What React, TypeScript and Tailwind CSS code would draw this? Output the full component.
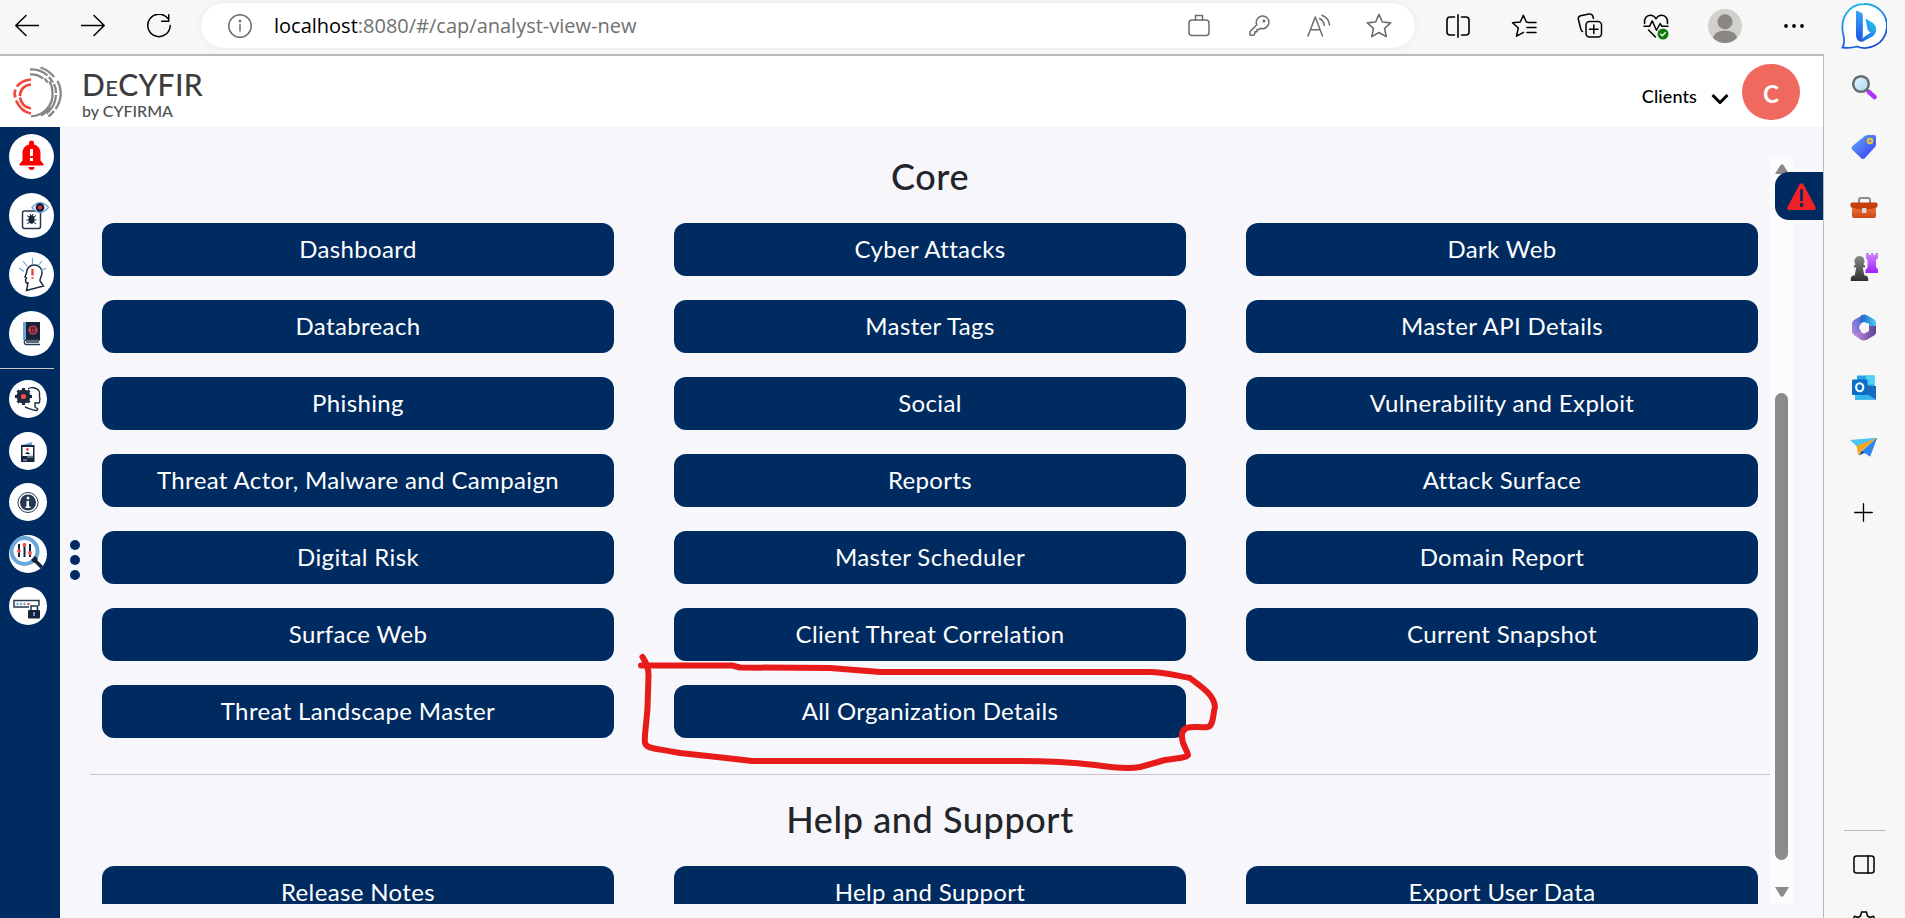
import type { ReactNode } from "react";

const CORE = [
  ["Dashboard", "Cyber Attacks", "Dark Web"],
  ["Databreach", "Master Tags", "Master API Details"],
  ["Phishing", "Social", "Vulnerability and Exploit"],
  ["Threat Actor, Malware and Campaign", "Reports", "Attack Surface"],
  ["Digital Risk", "Master Scheduler", "Domain Report"],
  ["Surface Web", "Client Threat Correlation", "Current Snapshot"],
  ["Threat Landscape Master", "All Organization Details"],
];
const HELP = ["Release Notes", "Help and Support", "Export User Data"];

type IconProps = { children: ReactNode; className?: string; box?: string };

function Line({ children, className = "size-6", box = "0 0 24 24" }: IconProps) {
  return (
    <svg viewBox={box} className={`shrink-0 ${className}`} fill="none" stroke="currentColor" strokeWidth="1.5" strokeLinecap="round" strokeLinejoin="round">
      {children}
    </svg>
  );
}

function Pic({ children, className = "size-7", box = "0 0 28 28" }: IconProps) {
  return (
    <svg viewBox={box} className={`shrink-0 ${className}`} fill="none">
      {children}
    </svg>
  );
}

function Toolbar() {
  return (
    <div className="flex h-[54px] items-center bg-[#f7f7f7] pb-[3px] pl-[15px] text-black">
      <Line className="size-6"><path d="M24 11.5H1M11 1.5L.8 11.5L11 21.5" /></Line>
      <Line className="ml-[42px] size-6"><path d="M0 11.5h23M13 1.5l10.2 10L13 21.5" /></Line>
      <Line className="ml-[42px] size-6"><path d="M20.6 4.2A11.2 11.2 0 1 0 23.2 11.5M21.7 .8v6.5h-7" /></Line>
      <div className="ml-[30px] flex h-[45px] w-[1214px] items-center rounded-full bg-white pl-[27px] pr-[6px] text-[#6d6d6d] shadow-[0_0_6px_rgba(0,0,0,0.07)]">
        <Line className="size-6">
          <circle cx="12" cy="12" r="11.2" /><path d="M12 10.5v6.5" /><circle cx="12" cy="7.2" r=".6" fill="currentColor" />
        </Line>
        <div className="ml-[22px] flex-1 whitespace-nowrap font-['Open_Sans',sans-serif] text-[20px] leading-[28px] text-[#707070]">
          <span className="text-black">localhost</span>:8080/#/cap/analyst-view-new
        </div>
        <div className="flex w-[60px] justify-center">
          <Line className="h-6 w-[22px]" box="0 0 22 24"><rect x="1" y="6" width="20" height="15.5" rx="3" /><path d="M7.500 6V1.500h7V6" /></Line>
        </div>
        <div className="flex w-[60px] justify-center">
          <Line className="size-[21px]" box="0 0 21 21"><path d="M7.8 9.8A6.3 6.3 0 1 1 11.3 13.2L10 14.5H8v2.2H5.8V19L4.6 20.2H1.2c-.3-1.2-.4-2.6 0-3.8z" /><circle cx="15" cy="6" r=".8" fill="currentColor" /></Line>
        </div>
        <div className="flex w-[60px] justify-center">
          <Line className="size-6"><path d="M1 22L8.300 3L15.500 22M3.500 15.800H13M12.500 4.500a9 9 0 0 1 4.800 7M15 1.200a12 12 0 0 1 7.500 9.800" /></Line>
        </div>
        <div className="flex w-[60px] justify-center">
          <Line className="size-[26px]"><path d="M12 1.300l3.100 7 7.700.8-5.700 5.100 1.600 7.600L12 18l-6.700 3.800 1.600-7.600L1.200 9.100l7.700-.8z" /></Line>
        </div>
      </div>
      <div className="ml-[10px] flex w-[66px] justify-center">
        <Line className="size-6"><path d="M8.500 3H4a3 3 0 0 0-3 3v12a3 3 0 0 0 3 3h4.500M15.500 3H20a3 3 0 0 1 3 3v12a3 3 0 0 1-3 3h-4.500M12 .8v22.400" strokeWidth="1.600" /></Line>
      </div>
      <div className="flex w-[66px] justify-center">
        <Line className="h-6 w-[26px]" box="0 0 26 24"><path d="M17 8.300L15.300 8L12.300 1.200L9.300 8L1.500 8.700L7.300 14L5.500 22.200L12.500 18.300M17 8.500h8M16 13.500h9M16 18.500h9" /></Line>
      </div>
      <div className="flex w-[66px] justify-center">
        <Line className="h-[25px] w-[26px]" box="0 0 26 25"><rect x="9" y="8.500" width="15.500" height="15.500" rx="3.500" /><path d="M16.800 12v8.500M12.500 16.200H21M5.500 18.500C4.600 18 4 17.200 3.800 16L1.400 6.500C1 4.500 1.800 3.300 3.600 2.800L12 1c2-.4 3.300.3 3.800 2l.6 2.200" /></Line>
      </div>
      <div className="flex w-[66px] justify-center">
        <Line className="mt-[3px] size-[26px]" box="0 0 26 26">
          <path d="M1.500 9.500C.8 4.500 3.600 1.300 7.200 1.300c2.600 0 4.600 1.500 5.800 3.500 1.200-2 3.200-3.500 5.800-3.500 3.600 0 6.400 3.200 5.700 8.200M1 12.300h5.500L9.200 6.800l4.200 9.500 3.800-6.800 1.600 2.800H25M5.500 16l7 7" />
          <circle cx="20" cy="20" r="5.500" fill="#107c10" stroke="none" /><path d="M17.800 20.300l1.500 1.400 2.900-3" stroke="white" />
        </Line>
      </div>
      <div className="flex w-[71px] justify-center">
        <Pic className="size-[34px]" box="0 0 34 34"><circle cx="17" cy="17" r="17" fill="#d2d0cd" /><circle cx="17" cy="12.700" r="7.500" fill="#8a8684" /><path d="M5 29C6 24 10 21.700 17 21.700S28 24 29 29A17 17 0 0 1 5 29" fill="#8a8684" /></Pic>
      </div>
      <div className="flex w-[63px] justify-center pl-1">
        <Pic className="h-1 w-5" box="0 0 20 4"><circle cx="2" cy="2" r="1.900" fill="black" /><circle cx="10" cy="2" r="1.900" fill="black" /><circle cx="18" cy="2" r="1.900" fill="black" /></Pic>
      </div>
    </div>
  );
}

function Brand() {
  return (
    <div className="flex items-center pt-[3px]">
      <svg viewBox="0 0 52 54" className="h-[54px] w-[52px]" fill="none" strokeWidth="2.300">
        <g stroke="#868686">
          <path d="M19 50.300A22 22 0 0 0 40.500 26.500C40.500 22.500 39.300 18.500 37.500 15.500" />
          <path d="M18 8.400C23 8 28 10 31 12.500M32.500 12.500l3.300 4" />
          <path d="M18 3.500C25 3 31 5.500 35.500 9.500M37 11l4 5.500M42 18c1.200 2.500 2 6 2 9M44 29c-.4 7-4 14-9.500 18.500" />
          <path d="M28.500 1.500c6 2 10.500 5.500 13.500 9.500M45.500 15c5 9 4 20-2 28M42 45c-1.500 2-3.500 4-5.500 5.500" />
          <path d="M29 49.500c4-2 7-5 9-8.500" />
        </g>
        <g stroke="#f0483f" strokeWidth="2.700">
          <path d="M19 13.500C13 14 8 16.500 4.800 20.500M3.500 23.500C2.500 25.500 2.500 29 3.300 31.500M4 34.500C7 41 12.500 46.500 19 47.500" />
          <path d="M19 18.500C12 19 8 24 8 30M8 31.500C9 37 13 41.500 19 42.500" />
        </g>
      </svg>
      <div className="ml-[18px] flex flex-col pt-[3px] font-['Lato',sans-serif] text-[#3c3c3c]">
        <div className="text-[30px] font-medium leading-[30px] tracking-[0.3px]">D<span className="text-[22px]">E</span>CYFIR</div>
        <div className="-mt-px text-[16px] font-medium leading-[18px] text-[#505050]">by CYFIRMA</div>
      </div>
    </div>
  );
}

function Header() {
  return (
    <header className="flex h-[71px] items-center justify-between bg-white pl-[12px] pr-[23px]">
      <Brand />
      <div className="flex items-center">
        <span className="pt-[10px] font-['Lato',sans-serif] text-[18px] font-medium tracking-[0.1px] text-black">Clients</span>
        <Line className="mt-[13px] ml-[14px] h-[11px] w-[18px]" box="0 0 18 11"><path d="M1.500 2L9 9.500L16.500 2" strokeWidth="3" strokeLinecap="butt" strokeLinejoin="miter" /></Line>
        <div className="ml-[13px] flex h-[56px] w-[58px] items-center justify-center rounded-full bg-[#f0695f] pt-1 font-['Lato',sans-serif] text-[24px] font-bold text-white">C</div>
      </div>
    </header>
  );
}

function Round({ small, children }: { small?: boolean; children: ReactNode }) {
  return (
    <div className={`shrink-0 overflow-hidden rounded-full bg-white ${small ? "size-[38px]" : "size-[45px]"}`}>
      <svg viewBox={small ? "0 0 38 38" : "0 0 45 45"} className="size-full" fill="none">{children}</svg>
    </div>
  );
}

function LeftRail() {
  return (
    <nav className="flex w-[60px] shrink-0 flex-col bg-[#002b61] pt-[7px]">
      <div className="flex flex-col gap-[14px] pl-[9px]">
        <Round>
          <path d="M20 10.500V9a2.500 2.500 0 0 1 5 0v1.500c4.500 1.200 6.500 4.500 6.500 9v7L34.500 30v1.500H10.500V30l3-3.500v-7c0-4.500 2-7.800 6.500-9zM19.500 33h6a3 3 0 0 1-6 0z" fill="#fb0000" />
          <path d="M21 15h3v7h-3zM21 24h3v3h-3z" fill="white" />
        </Round>
        <Round>
          <rect x="13.500" y="18" width="18" height="17.500" rx="2" stroke="#26374f" strokeWidth="1.500" />
          <path d="M23 14.500Q31 5 39.500 14.500Q31 24 23 14.500z" fill="white" stroke="#6aa6da" strokeWidth="1.300" />
          <circle cx="31" cy="14.500" r="4.400" fill="#15243b" /><circle cx="31" cy="14.500" r="2" fill="#e02f3a" />
          <ellipse cx="22.500" cy="26.500" rx="3" ry="4.300" fill="#15243b" />
          <path d="M18 22.500l2 1.500M27 22.500l-2 1.500M17.500 27h10M18 31l2.500-2M27 31l-2.500-2M21 21l1 2M24 21l-1 2" stroke="#15243b" />
        </Round>
        <Round>
          <path d="M17.500 38.500l1.500-7.500c-3 .5-2-2-2.500-3.500l1-1.500-1.500-1 1.500-4c0-5 3.500-8 7.500-8 5 0 8 3.500 8 7.500 0 4-2.500 6-2 8.500l3.500 5z" stroke="#1b2a40" strokeWidth="1.500" />
          <path d="M23.500 17v6.500M23.500 25.200v1.500" stroke="#ef3a3a" strokeWidth="2.300" />
          <path d="M10 16l5 3.500M14 9l4 5M23.500 6v6M33 9l-4 5M37 16l-5 3" stroke="#6aa6da" strokeWidth="1.200" />
        </Round>
        <Round>
          <path d="M16 11h15v18H14v-16a2 2 0 0 1 2-2z" fill="#15243b" /><path d="M14 13a2 2 0 0 1 2-2h1v18h-3z" fill="#6aa6da" />
          <path d="M31 29H17a2.300 2.300 0 0 0 0 4.500h14M17 31h13" stroke="#26374f" strokeWidth="1.300" />
          <circle cx="24" cy="19" r="4" stroke="#e5434c" strokeWidth="1.200" /><path d="M20 19h8M24 15v8M22 15.500q-1.500 3.500 0 7M26 15.500q1.500 3.500 0 7" stroke="#e5434c" strokeWidth=".8" />
        </Round>
      </div>
      <div className="mt-[12px] w-[54px] border-t border-[#c9c9c9]" />
      <div className="mt-[11px] flex flex-col gap-[13.700px] pl-[9px]">
        <Round small>
          <circle cx="14.500" cy="16.500" r="5" stroke="#1b2a40" strokeWidth="4" />
          <path d="M14.500 8v17M6 16.500h17M8.500 10.500l12 12M8.500 22.500l12-12" stroke="#1b2a40" strokeWidth="3" />
          <circle cx="14.500" cy="16.500" r="4" fill="#1b2a40" /><circle cx="14.500" cy="16.500" r="2.600" fill="#f0504a" />
          <path d="M19 9c2-2 9-2 11 2 1.500 3-.5 5 1 8-1 1 .5 3-1 4h-4v4l3 2M16 27c4 1.500 7 3.500 12 3.500l1-2" stroke="#1b2a40" strokeWidth="1.400" />
        </Round>
        <Round small>
          <path d="M13 13l10-3v3z" fill="#6aa6da" /><path d="M12 13h13.500v17H12z" fill="#15243b" /><path d="M13.500 15h10.500v9H13.500z" fill="white" />
          <circle cx="18.500" cy="17.500" r="1.400" fill="#f0504a" /><path d="M16 22q2.500-4 5 0z" fill="#15243b" /><path d="M18 23h6M18 25h6M14 28h4" stroke="#b6bcc6" strokeWidth="1" />
        </Round>
        <Round small>
          <circle cx="19" cy="19.500" r="10" stroke="#26374f" strokeWidth="1" /><circle cx="19" cy="19.500" r="8" fill="#26374f" />
          <path d="M17.500 18h2.500v6.500h-2.500zM16.500 23.500h5v1.500h-5z" fill="white" /><circle cx="19" cy="15" r="1.500" fill="white" />
        </Round>
        <Round small>
          <circle cx="15.500" cy="16" r="13" stroke="#6aa6da" strokeWidth="4" /><path d="M22 25l4-4 3 3-4 4z" fill="#15243b" /><path d="M26 25.500l7 7" stroke="#15243b" strokeWidth="3.500" />
          <path d="M10 9v13M15.500 8.500v13.500M21 9v13" stroke="#15243b" strokeWidth="2" />
          <circle cx="10" cy="16" r="1.900" fill="#f0504a" /><circle cx="15.500" cy="10" r="1.900" fill="#f0504a" /><circle cx="21" cy="18" r="1.900" fill="#f0504a" />
        </Round>
        <Round small>
          <path d="M20 20H5v-6.500h25V19" stroke="#26374f" strokeWidth="1.500" />
          <g fill="#6aa6da"><circle cx="8.500" cy="17" r="1.200" /><circle cx="12" cy="17" r="1.200" /><circle cx="15.500" cy="17" r="1.200" /></g><circle cx="19.500" cy="17" r="1.300" fill="#f0504a" />
          <path d="M22 23v-4h6.500v4" stroke="#26374f" strokeWidth="1.600" /><rect x="19" y="23" width="12" height="8.500" rx="1" fill="#15243b" /><path d="M25 25v4" stroke="#6aa6da" strokeWidth="1.800" />
        </Round>
      </div>
    </nav>
  );
}

function Tile({ label }: { label: string }) {
  return (
    <button className="flex h-[53px] items-center justify-center whitespace-nowrap rounded-[12px] bg-[#002b61] pb-[2px] font-['Lato',sans-serif] text-[24px] leading-[36px] tracking-[0.36px] text-white">
      {label}
    </button>
  );
}

function Title({ children }: { children: ReactNode }) {
  return <h2 className="text-center font-['Lato',sans-serif] text-[36px] font-medium leading-[44px] tracking-[0.6px] text-[#212529]">{children}</h2>;
}

function Main() {
  return (
    <main className="relative flex flex-1 bg-[#f7f6fb]">
      <div className="flex w-[30px] flex-col items-center gap-[5px] pt-[413px]">
        <i className="size-[10px] rounded-full bg-[#002b61]" />
        <i className="size-[10px] rounded-full bg-[#002b61]" />
        <i className="size-[10px] rounded-full bg-[#002b61]" />
      </div>
      <div className="h-[777px] w-[1680px] overflow-hidden">
        <div className="pt-[27px]"><Title>Core</Title></div>
        <div className="mt-[25px] grid grid-cols-3 gap-x-[60px] gap-y-6 px-3">
          {CORE.flat().map((label) => <Tile key={label} label={label} />)}
        </div>
        <div className="mt-[36px] border-t border-[#c4c4ca]" />
        <div className="mt-[22px]"><Title>Help and Support</Title></div>
        <div className="mt-[25px] grid grid-cols-3 gap-x-[60px] px-3">
          {HELP.map((label) => <Tile key={label} label={label} />)}
        </div>
      </div>
      <div className="mt-[30px] flex h-[747px] w-[23px] flex-col items-center bg-[#fcfcfc] pt-[7px] pb-[7px]">
        <Pic className="h-[10px] w-[14px]" box="0 0 14 10"><path d="M5.500 1Q7-.5 8.500 1L14 10H0z" fill="#8b8b8b" /></Pic>
        <div className="mt-[219px] h-[467px] w-[13px] rounded-full bg-[#8b8b8b]" />
        <Pic className="mt-auto h-[10px] w-[14px]" box="0 0 14 10"><path d="M0 0h14L8.500 9Q7 10.500 5.500 9z" fill="#8b8b8b" /></Pic>
      </div>
      <div className="absolute top-[45px] right-0 flex h-[48px] w-[48px] items-center justify-center rounded-l-[14px] bg-[#002b61] pl-1">
        <Pic className="h-[27px] w-[29px]" box="0 0 29 27"><path d="M12.500 1.500q2-2.500 4 0L28.500 24q.8 3-1.500 3H2q-2.300 0-1.500-3z" fill="#f02228" /><path d="M14.500 7.500v9.500" stroke="#002b61" strokeWidth="2.800" strokeLinecap="round" /><circle cx="14.500" cy="22" r="1.900" fill="#002b61" /></Pic>
      </div>
      <svg className="pointer-events-none absolute top-[523px] left-[570px] h-[130px] w-[600px]" viewBox="630 650 600 130" fill="none" stroke="#e81b1b" strokeWidth="6" strokeLinecap="round" strokeLinejoin="round">
        <path d="M642.500 657C646 662 648.500 667 648.500 675L647.500 708C646 728 644 738 645 743C647 749 655 748 680 753L726 758L752 761H1020C1045 761 1070 762 1095 765C1115 768 1130 769 1140 767L1165 760C1178 758 1186 758 1188 755C1186 747 1181 744 1182 734C1184 724 1195 728 1208 727C1214 725 1213 712 1215 707C1214 694 1200 686 1190 678C1178 676 1165 672 1150 672H880L830 668L740 667.500L732 665.500H641" />
      </svg>
    </main>
  );
}

function SideItem({ children }: { children: ReactNode }) {
  return <div className="flex h-[60px] shrink-0 items-center justify-center">{children}</div>;
}

function EdgeRail() {
  return (
    <aside className="flex h-[918px] w-[81px] shrink-0 flex-col bg-[#f7f7f7] pr-[2px]">
      <div className="flex h-[57px] items-start justify-center pt-[3px]">
        <Pic className="h-[47px] w-[46px]" box="0 0 46 47">
          <defs>
            <linearGradient id="ring" x1="0" y1="0" x2=".4" y2="1"><stop stopColor="#20c3ee" /><stop offset="1" stopColor="#1b4fd6" /></linearGradient>
            <linearGradient id="stem" x1="0" y1="0" x2="0" y2="1"><stop stopColor="#39a8f5" /><stop offset="1" stopColor="#1c55e4" /></linearGradient>
            <linearGradient id="bowl" x1="1" y1="0" x2="0" y2="1"><stop stopColor="#28d0ee" /><stop offset="1" stopColor="#1d4ee0" /></linearGradient>
          </defs>
          <path d="M23 1a22 22 0 1 1-7 42.500C11 45 5 45 1.500 44.500 3.500 41 3.500 36 2 30C-1 15 8 1 23 1z" fill="white" stroke="url(#ring)" strokeWidth="1.800" />
          <path d="M15 8.500Q15 7.500 16.500 8l3.500 1.600q1.800.8 1.800 2.600V34q-1.500 3-4.500 3-2-1-2.300-4z" fill="url(#stem)" />
          <path d="M24.500 15.500l6.500 3.700c5.500 3.500 5.500 10.500 1 14L22 38.500q-4.500 1-6-3 3 1.500 6-.8l7.500-5.200-2.800-2.500z" fill="url(#bowl)" />
        </Pic>
      </div>
      <SideItem>
        <Pic className="size-[26px]" box="0 0 26 26">
          <defs><linearGradient id="glass" x1="0" y1="0" x2="1" y2="1"><stop stopColor="#eaf6fd" /><stop offset="1" stopColor="#a8d6f4" /></linearGradient></defs>
          <path d="M15 15l4 4" stroke="#666" strokeWidth="3" /><circle cx="10" cy="10" r="7.800" fill="url(#glass)" stroke="#666b6e" strokeWidth="2.500" /><path d="M18 18l5.500 5" stroke="#b036f5" strokeWidth="4.500" strokeLinecap="round" />
        </Pic>
      </SideItem>
      <SideItem>
        <Pic className="size-[26px]" box="0 0 26 26">
          <defs><linearGradient id="tag" x1="0" y1="0" x2="1" y2="1"><stop stopColor="#62aef9" /><stop offset="1" stopColor="#3a34ef" /></linearGradient></defs>
          <path d="M13 2.500Q14.500 1 17 1h6q2 0 2 2v7q0 2-1.500 3.500L14 24q-2 2-4 0L1.500 16q-2-2 0-4z" fill="url(#tag)" /><circle cx="19" cy="7" r="2.400" fill="#7a89d8" stroke="#f7cd1f" strokeWidth="1.700" />
        </Pic>
      </SideItem>
      <SideItem>
        <Pic className="mt-[2px] h-[22px] w-[28px]" box="0 0 28 22">
          <defs><linearGradient id="case" x1="0" y1="0" x2="0" y2="1"><stop stopColor="#f07a3a" /><stop offset="1" stopColor="#cf4412" /></linearGradient></defs>
          <path d="M9 6V3q0-2 2-2h7q2 0 2 2v3" stroke="#8c8c8c" strokeWidth="2" /><path d="M2 9h24v10q0 2-2 2H4q-2 0-2-2z" fill="url(#case)" /><path d="M2 5.500h24q1.500 0 1.500 2V10Q21 13 14 13T.5 10V7.500q0-2 1.500-2z" fill="#c5400d" /><rect x="12" y="11" width="4.500" height="5" rx="1" fill="#d7dade" />
        </Pic>
      </SideItem>
      <SideItem>
        <Pic className="size-[28px]">
          <defs><linearGradient id="pawn" x1="0" y1="0" x2="0" y2="1"><stop stopColor="#8a8a8a" /><stop offset="1" stopColor="#2e2e2e" /></linearGradient><linearGradient id="rook" x1="0" y1="0" x2="0" y2="1"><stop stopColor="#cf85fb" /><stop offset="1" stopColor="#a022fb" /></linearGradient></defs>
          <path d="M16 0h3v2h2V0h2.500v2h2V0H28v5l-2 2v7l2 2.500V20H15.500v-3l2-2.500V7L16 5z" fill="url(#rook)" />
          <path d="M9.500 3a5 5 0 0 1 3.800 8.300L15 12.500V14.500h-2.200l1.500 8H16q2.200 1 2.200 3v2.500H.8V25.500q0-2 2.200-3h1.700l1.500-8H4V12.500l1.700-1.200A5 5 0 0 1 9.500 3z" fill="url(#pawn)" />
        </Pic>
      </SideItem>
      <SideItem>
        <Pic className="h-[27px] w-[26px]" box="0 0 26 27">
          <defs><linearGradient id="m1" x1="0" y1="1" x2="1" y2="0"><stop stopColor="#b78be0" /><stop offset="1" stopColor="#3868cf" /></linearGradient><linearGradient id="m2"><stop stopColor="#2262c5" /><stop offset="1" stopColor="#48ccf5" /></linearGradient><linearGradient id="m3"><stop stopColor="#ca94e8" /><stop offset="1" stopColor="#5a3f91" /></linearGradient></defs>
          <path d="M12 1L3 6Q1 7.300 1 9.500v9l3 3 6-3.500V9.500z" fill="url(#m1)" /><path d="M10 1.500Q13-.5 16 1.200l7 4q2 1.200 2 3.500V15l-7-1.500V9.800L13 8 9.500 9.500z" fill="url(#m2)" /><path d="M25 12v6q0 2.200-2 3.500l-7 4.200q-3 1.500-6 0L2 20.500 10 18l3 1.800L18 17v-5z" fill="url(#m3)" /><circle cx="13" cy="13.500" r="4.700" fill="#f7f7f7" />
        </Pic>
      </SideItem>
      <SideItem>
        <Pic className="h-[25px] w-[26px]" box="0 0 26 25">
          <path d="M6 .5h17.500v14H6z" fill="#29a5e6" /><path d="M15 .5h8.500v9H15z" fill="#50d1f8" /><path d="M4 11l21 0v13.500H4z" fill="#1a6bc0" /><path d="M4 14l21 10.500H4z" fill="#3cc3f1" /><path d="M25 11L14 18l11 6.500z" fill="#176cbf" /><path d="M14 18l11 6.500H4z" fill="#32b5ec" /><rect x="1" y="4.500" width="15.500" height="15.500" rx="1" fill="#0d6dca" /><ellipse cx="8.700" cy="12.300" rx="3.600" ry="4" stroke="white" strokeWidth="2.100" />
        </Pic>
      </SideItem>
      <SideItem>
        <Pic className="h-[20px] w-[27px]" box="0 0 27 20">
          <path d="M0 3L27 .8 7.500 10z" fill="#4dc2f4" /><path d="M27 .8L20 19.500 13 15z" fill="#2c79ed" /><path d="M27 .8L12.500 13 8.500 18.500 6.500 9z" fill="#f3a51d" /><path d="M12 13.500l-3 5 6-3z" fill="#1440a8" /><path d="M27 .8L12.500 13.500 20 19.500z" fill="#3187f1" />
        </Pic>
      </SideItem>
      <div className="mt-[26px] flex h-[19px] items-center justify-center text-black">
        <Line className="size-[19px]" box="0 0 19 19"><path d="M9.500 .7v17.600M.7 9.500h17.600" strokeWidth="1.300" /></Line>
      </div>
      <div className="mt-[308px] ml-5 w-[42px] border-t border-[#b9b9b9]" />
      <div className="mt-6 flex justify-center text-black">
        <Line className="h-[19px] w-[22px]" box="0 0 22 19"><rect x="1" y="1" width="20" height="17" rx="2.500" /><path d="M15 1v17" /></Line>
      </div>
      <div className="mt-[37px] flex h-[7px] justify-center overflow-hidden text-black">
        <Line className="size-6"><path d="M9.500 1h5l1 4 2.500 1.500 3.500-1.200 2 4-2.500 2.700v2l2.500 2.500-2 4-3.500-1-2.500 1.500-1 3h-5l-1-3L6 19.500l-3.500 1-2-4L3 14v-2L.5 9.300l2-4L6 6.500 8.500 5z" /></Line>
      </div>
    </aside>
  );
}

export default function App() {
  return (
    <div className="flex h-[918px] w-[1905px] overflow-hidden bg-[#f7f7f7]">
      <div className="flex w-[1824px] shrink-0 flex-col">
        <Toolbar />
        <div className="flex flex-1 flex-col border-t-2 border-r border-[#b9b9b9]">
          <Header />
          <div className="flex flex-1">
            <LeftRail />
            <Main />
          </div>
        </div>
      </div>
      <EdgeRail />
    </div>
  );
}
